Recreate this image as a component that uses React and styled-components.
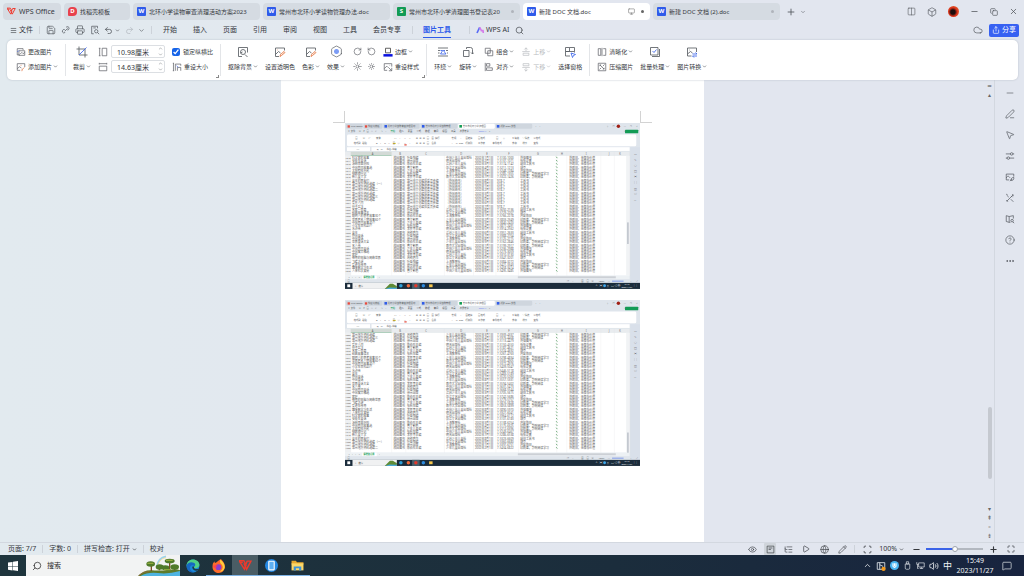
import React, {useState} from 'react';
import styled, {createGlobalStyle} from 'styled-components';
import {
    Search, Printer, Save, Undo2, Redo2, ChevronDown, Menu, Plus, Minus, X, Play, Globe, Eye,
    Pencil, Maximize, CircleHelp, Ellipsis, MousePointer2, Box, Columns2, Copy, Monitor,
    Cloud, Share, RotateCw, RotateCcw, Sun, SunDim, ListTree, ChevronUp, MessageSquare,
    Volume2, PenLine, Hexagon, Scan,
} from 'lucide-react';


const files = [
    {kind: 'doc', name: '北环小学读物审查清理活动方案2023'},
    {kind: 'doc', name: '常州市北环小学读物管理办法.doc'},
    {kind: 'sheet', name: '常州市北环小学清理图书登记表20', dot: true},
    {kind: 'doc', name: '新建 DOC 文档.doc', dot: true, active: true},
    {kind: 'doc', name: '新建 DOC 文档 (2).doc', dot: true},
];

const menus = ['开始', '插入', '页面', '引用', '审阅', '视图', '工具', '会员专享'];

// outlines on a 24 unit grid: grey strokes first, accent strokes second
const glyphs = {
    change: ['M9 19H3V4h14v3M7 9h14v11H7zM10 17l4-4 3 3 4-3', 'M3 12l4-4'],
    add: ['M10 20H3V4h18v8M3 16l6-5 4 4', 'M14 19l6-6M11 8h2M14 22l1-4'],
    crop: ['M6 1v17h17M1 6h17v17', 'M6 18L21 3'],
    high: ['M10 3h11v18H10zM2 3h4M2 21h4M4 3v18'],
    wide: ['M3 10h18v11H3zM3 2v4M21 2v4M3 4h18'],
    resize: ['M8 21V5h13v4M2 3h3M2 21h3M3.500 3v18M13 21v-8h8v8', 'M11 9l4 4'],
    cutout: ['M10 21H3V3h18v10M16 17l5 5M12 7a5 5 0 100 10 5 5 0 000-10M7 14l4-2'],
    transparent: ['M10 21H3V4h18v5M3 17l6-6 4 3', 'M12 21l1-4 7-6 2 2-7 6zM7 8h1'],
    color: ['M10 21H3V4h18v5M3 17l6-6 4 3', 'M12 21l1-4 7-6 2 2-7 6z'],
    restyle: ['M21 11V4H3v16h7M3 16l6-6 3 3M13 13l8 8M21 14v7h-7M16 8h1'],
    wrap: ['M2 4h20M2 20h20M2 9h4M18 9h4M2 14h3M20 14h2', 'M7 16l5-8 6 8zM7 9h3M14 9h2'],
    rotate: ['M3 9h11v12H3zM9 6V3h8a4 4 0 014 4v9M18 13l3 3 3-3'],
    group: ['M3 3h12v12H3zM9 9h12v12H9z'],
    align: ['M3 2v20M6 4h8v6H6zM6 14h14v6H6z'],
    up: ['M12 2v8M8 6l4-4 4 4M3 11h18M5 15h14v5H5z'],
    down: ['M12 14v8M8 18l4 4 4-4M3 13h18M5 4h14v5H5z'],
    pane: ['M3 3h8v8H3zM11 3h10v8M12 20H3v-9h18v2', 'M14 14l9 3-4 2-2 4z'],
    sharpen: ['M3 4h6v16H3zM15 4h6v16h-6M12 2v20'],
    compress: ['M3 3h18v18H3zM6 18l4-4M18 6l-4 4M17 14v3h-3M7 10V7h3M7 7l10 10'],
    batch: ['M3 3h15v15H3zM21 6v15H6', 'M7 10l3 3 5-6'],
    convert: ['M11 20H3V4h18v8M3 16l6-5 4 3M7 8h1', 'M13 16h9l-3-3M22 20h-9l3 3'],
    sliders: ['M2 7h11M16 4a3 3 0 100 6 3 3 0 000-6M19 7h3M22 17H11M8 14a3 3 0 100 6 3 3 0 000-6M2 17h3'],
    shape: ['M10 19H3V5h18v6M3 14c4-6 6-4 9 0M14 20c0-4 3-7 7-7 1 5-2 8-7 7M12 22l5-5'],
    tools: ['M4 20L20 4M17 3l4 4M4 5l5 5M14 15l6 6M3 3l3 1M3 17l4 4M15 7l3 3'],
    read: ['M3 4l7 2v14l-7-2zM10 6l10-2v7M10 20h3M17 13a3 3 0 100 6 3 3 0 000-6M19 19l3 3'],
    link: ['M9 15l7-7M9 11a4 4 0 10-3 8l4-1M12 6a4 4 0 113 6'],
    preview: ['M9 21H4V3h14v5M8 7h6M15 11a4 4 0 100 8 4 4 0 000-8M18 18l4 4'],
    page: ['M3 3h18v18H3zM7 8h10M7 12h6'],
    usb: ['M9 2h6v6H9zM6 8h12v11a3 3 0 01-3 3H9a3 3 0 01-3-3z'],
    network: ['M7 5h15v11H7zM14 16v4M10 20h9M2 3v6h5M4 9v11h3'],
};

const Glyph = ({name, size = 10, accent = '#3b63e8'}) => (
    <svg width={size} height={size} viewBox="0 0 24 24" fill="none" strokeWidth="1.7" aria-hidden="true">
        <path d={glyphs[name][0]} stroke="currentColor"/>
        {glyphs[name][1] && <path d={glyphs[name][1]} stroke={accent}/>}
    </svg>
);

const WpsMark = ({size = 8}) => (
    <svg width={size} height={size} viewBox="0 0 24 24" aria-hidden="true">
        <path d="M0 3h9l4 8-3 8zM2 6h5" fill="none" stroke="#f0382b" strokeWidth="2.600"/>
        <path d="M9 8l5 11L22 4h-7l-2 5" fill="none" stroke="#f0382b" strokeWidth="2.600"/>
    </svg>
);

const Caret = () => <ChevronDown size={5} strokeWidth={3}/>;

const Big = ({glyph, label, caret, accent, icon}) => (
    <BigButton type="button">
        {icon || <Glyph name={glyph} size={12} accent={accent}/>}
        <Label>{label}{caret && <Caret/>}</Label>
    </BigButton>
);

const Small = ({glyph, label, caret, accent, disabled}) => (
    <SmallButton type="button" disabled={disabled}>
        <Glyph name={glyph} size={10} accent={accent}/>
        <Label>{label}{caret && <Caret/>}</Label>
    </SmallButton>
);


// the two pasted screenshots of the book list
const titles = [
    '科学家的故事', '安徒生童话', '汤姆索亚历险', '中国民间故事选', '太阳照样升起', '骑鹅旅行记', '新儿童文学', '童年的朋友们',
    '常州地方资料选编（一）', '常州地方资料选编', '常州地方资料选编二', '常州地方资料选编', '常州地方资料选编三', '常州地方资料选编', '爱在人间',
    '孙子兵法', '名家一百篇', '经典故事读本', '聪明人的思考故事30个', '世界著名人物故事60个', '中国民间故事40个', '小学生百科40个',
    '水浒传', '童年', '外国童话', '中国童话', '世界童话大全', '名人传', '中国民间童话', '中国寓言精选', '家庭', '神奇的电脑与网络世界', '飞碟之谜',
    '爱迪生传奇', '趣味数学与生活', '人体科学奥秘',
];
const writers = ['叶圣陶编', '曹文轩著', '李民等主编', '徐州出版', '少年儿童编', '周锐著作', '陈伯吹主编', '张秋生编'];
const presses = [
    '中国少年儿童出版社', '浙江文艺出版社', '南京大学出版社', '江苏少年儿童社', '少年儿童出版社', '明天出版社', '上海教育社',
];
const notes = ['外借图书', '破旧工具书', '内容陈旧', '印刷差，影响阅读', '纸张泛黄', '缺页', '印刷差，影响阅读学习'];

const buildRows = (shift) => titles.map((_, i) => {
    const k = i + shift;
    const local = !shift && i > 6 && i < 16;
    return {
        no: 1840 + k,
        title: titles[k % titles.length],
        writer: local ? '常州市文化编撰委员会编' : writers[(k * 3) % writers.length],
        press: local ? '（外国画书）' : presses[(k * 5) % presses.length],
        date: `2002年${k % 9 + 1}月1日`,
        isbn: local ? '978-7' : `7-5${(k * 37) % 900 + 100}-${(k * 71) % 9000 + 1000}`,
        note: local ? '工具书' : notes[(k * 4) % notes.length],
    };
});

const heads = [['A', 96], ['B', 191], ['C', 281], ['D', 403], ['E', 493], ['F', 569], ['G', 670], ['H', 753], ['I', 837], ['J', 917], ['K', 955]];
const lines = [20, 162, 211, 345, 446, 524, 602, 735, 770, 888, 935, 988];

// [y, [[x, text], ...]] for the ribbon of the pasted screenshots
const ribbonTexts = [
    [15, [[20, 'WPS Office'], [80, '找稻壳模板'], [148, '北环小学读物审查清理活动'], [279, '常州市北环小学读物管理'], [409, '常州市北环小学清理图'], [539, '新建 DOC 文档'], [660, '+'], [672, '⌄'], [910, '▯'], [928, '◎'], [968, '—'], [988, '❐'], [1009, '✕']]],
    [32, [[10, '☰'], [20, '文件'], [48, '▣'], [62, '∂'], [75, '▤'], [89, '◰'], [104, '↶'], [125, '↷'], [140, '⌄'], [500, '⌕'], [968, '☁']]],
    [56, [[36, '▤'], [62, '▣'], [82, '✂'], [108, '宋体'], [170, '11'], [186, '⌄'], [206, 'A'], [222, 'A'], [246, '≡'], [258, '≡'], [270, '≡'], [284, '▤'], [300, '▦'], [312, '换行'], [370, '常规'], [398, '⌄'], [418, '▦转换'], [462, '▤格式'], [524, '▤'], [550, '◫'], [580, '∑填充'], [616, '▽筛选'], [654, '▣格式']]],
    [72, [[30, '格式刷'], [60, '粘贴'], [108, 'B'], [122, 'I'], [136, 'U'], [150, 'A'], [166, '▦'], [182, '◇'], [206, 'A'], [222, '⌄'], [246, '≡'], [258, '≡'], [270, '≡'], [284, '▤'], [300, '合并'], [370, '¥'], [384, '%'], [396, '000'], [418, '行和列'], [462, '工作表'], [512, '条件格式'], [580, '求和'], [616, '排序'], [654, '查找']]],
    [94, [[40, 'A1'], [110, 'Q'], [124, 'fx'], [144, '书名/书籍']]],
    [539, [[12, '«'], [24, '‹'], [36, '›'], [48, '»'], [117, '+']]],
    [552, [[9, '▤'], [770, '◎'], [788, '⌄'], [820, '▦'], [838, '▤'], [856, '▣'], [880, '100%'], [912, '—'], [990, '+'], [1010, '⤢']]],
];

const SheetPicture = ({shift, label}) => (
    <Picture viewBox="0 0 1024 576" role="img" aria-label={label}>
        <rect width="1024" height="576" fill="#dfe5ec"/>
        <g fill="#cfd6de">
            <rect x="3" y="3" width="58" height="17" rx="4"/>
            <rect x="64" y="3" width="66" height="17" rx="4"/>
            <rect x="133" y="3" width="126" height="17" rx="4"/>
            <rect x="263" y="3" width="127" height="17" rx="4"/>
            <rect x="523" y="3" width="127" height="17" rx="4"/>
        </g>
        <rect x="393" y="3" width="127" height="17" rx="4" fill="#fff"/>
        <rect x="9" y="8" width="8" height="8" fill="#e9493c"/>
        <rect x="69" y="8" width="8" height="8" fill="#e9493c"/>
        <rect x="137" y="7" width="9" height="9" fill="#2f5ce8"/>
        <rect x="267" y="7" width="9" height="9" fill="#2f5ce8"/>
        <rect x="397" y="7" width="9" height="9" fill="#129b55"/>
        <rect x="527" y="7" width="9" height="9" fill="#2f5ce8"/>
        <circle cx="949" cy="11" r="6" fill="#a02015"/>
        <rect x="972" y="23" width="46" height="13" rx="2" fill="#129b55"/>
        <rect x="7" y="40" width="1004" height="41" rx="5" fill="#fff"/>
        <rect x="166" y="69" width="10" height="4" fill="#f1cd28"/>
        <rect x="206" y="74" width="8" height="4" fill="#e0402f"/>
        <rect x="7" y="84" width="80" height="13" fill="#fff"/>
        <rect x="92" y="84" width="896" height="13" fill="#fff"/>
        <rect y="100" width="988" height="14" fill="#e9ecef"/>
        <rect x="20" y="100" width="142" height="14" fill="#d3dad6"/>
        <path d="M20 114h142" stroke="#4aa872" strokeWidth="2"/>
        <rect y="114" width="988" height="416" fill="#fff"/>
        <rect y="114" width="20" height="416" fill="#eef0f2"/>
        <rect x="976" y="114" width="12" height="416" fill="#f1f3f5"/>
        <rect x="979" y={shift ? 460 : 345} width="6" height="75" fill="#c3c8cf"/>
        <rect x="990" y="84" width="34" height="471" fill="#d9e0ea"/>
        <rect y="530" width="988" height="12" fill="#edf1f4"/>
        <rect x="600" y="532" width="340" height="7" fill="#ccd0d6"/>
        <rect x="60" y="530" width="50" height="12" fill="#fff"/>
        <path d={lines.map((x) => `M${x} 100V530`).join('')} stroke="#e2e4e6" strokeWidth="1"/>
        <g fontSize="8" fill="#5a5e63">
            {ribbonTexts.map(([y, items]) => items.map(([x, text]) => (
                <text key={`${x}-${y}`} x={x} y={y}>{text}</text>
            )))}
            {['开始', '插入', '页面', '公式', '数据', '审阅', '视图', '工具', '会员专享'].map((m, i) => (
                <text key={m} x={158 + i * 30} y="32" fill={i ? '#444' : '#129b55'}>{m}</text>
            ))}
            <text x="464" y="32" fill="#5a6cf0">WPS AI</text>
            <text x="63" y="539" fontWeight="700" fill="#129b55">清理登记表</text>
        </g>
        <g fontSize="9" fill="#666">
            {heads.map(([h, x]) => <text key={h} x={x} y="111" textAnchor="middle">{h}</text>)}
        </g>
        <g fontSize="10" fill="#5c5c5c">
            {buildRows(shift).map((r, i) => (
                <g key={r.no} transform={`translate(0 ${125 + i * 11.25})`}>
                    <text x="1" fontSize="8">{r.no}</text>
                    <text x="24">{r.title}</text>
                    <text x="168">校园图书</text>
                    <text x="215">{r.writer}</text>
                    <text x="351">{r.press}</text>
                    <text x="451">{r.date}</text>
                    <text x="528">{r.isbn}</text>
                    <text x="608">{r.note}</text>
                    <text x="778">外观旧，无保存价值</text>
                    <path d="M733 -8l4 5" stroke="#3f8f4d" strokeWidth="2.500"/>
                </g>
            ))}
        </g>
        <g fontSize="10" fill="#666">
            {['—', '✎', '◇', '◰', '▣', '▤', '◫', '◎', '…'].map((s, i) => <text key={s} x="1003" y={111 + i * 20}>{s}</text>)}
        </g>
        <path d="M927 549h40" stroke="#3b63e8" strokeWidth="2"/>
        <rect y="555" width="1024" height="21" fill="#1b2c3b"/>
        <rect x="26" y="555" width="154" height="21" fill="#f0f1f2"/>
        <text x="33" y="569" fontSize="9" fill="#333">⌕</text>
        <text x="47" y="569" fontSize="8" fill="#333">搜索</text>
        <path d="M138 576l10-10 8-8h10l10 6 4 2v10z" fill="#5f8b35"/>
        <path d="M140 576l14-5 26 1v4z" fill="#4aa9d8"/>
        <path d="M8 560h10v10H8z" fill="#fff"/>
        <rect x="233" y="555" width="26" height="21" fill="#49606c"/>
        <circle cx="194" cy="565" r="6" fill="#2c9fd9"/>
        <circle cx="220" cy="565" r="6" fill="#f0693a"/>
        <circle cx="246" cy="565" r="6" fill="#e3392c"/>
        <circle cx="272" cy="565" r="6" fill="#2d8be0"/>
        <rect x="292" y="560" width="12" height="10" fill="#f6c64b"/>
        <g fill="#e6ebef" fontSize="10">
            <text x="870" y="569">^</text>
            <text x="883" y="569">▣</text>
            <text x="910" y="569">▯</text>
            <text x="922" y="569">▭</text>
            <text x="935" y="569">◁</text>
            <text x="946" y="569">中</text>
            <text x="978" y="564" fontSize="7" textAnchor="middle">15:48</text>
            <text x="978" y="574" fontSize="7" textAnchor="middle">2023/11/27</text>
            <text x="1003" y="569">▢</text>
        </g>
        <circle cx="901" cy="565" r="5" fill="#3ea7ea"/>
    </Picture>
);


const App = () => {
    const [locked, setLocked] = useState(true);
    const [zoom, setZoom] = useState(50);

    return (
        <Window>
            <GlobalStyle/>
            <TitleBar>
                <Tab type="button" $w={58}><WpsMark size={9}/><TabName $home>WPS Office</TabName></Tab>
                <Tab type="button" $w={66}><FileMark $kind="docer">D</FileMark><TabName>找稻壳模板</TabName></Tab>
                {files.map((file) => (
                    <Tab type="button" key={file.name} $w={127} $active={file.active}>
                        <FileMark $kind={file.kind}>{file.kind === 'sheet' ? 'S' : 'W'}</FileMark>
                        <TabName>{file.name}</TabName>
                        {file.active && <Monitor size={7} color="#777"/>}
                        {file.dot && <Dot $active={file.active}/>}
                    </Tab>
                ))}
                <TabTools>
                    <IconButton type="button" aria-label="新建"><Plus size={10}/></IconButton>
                    <IconButton type="button" aria-label="更多标签"><ChevronDown size={6}/></IconButton>
                </TabTools>
                <WindowTools>
                    <IconButton type="button" aria-label="分栏"><Columns2 size={9} strokeWidth={1.5}/></IconButton>
                    <IconButton type="button" aria-label="应用"><Box size={10} strokeWidth={1.5}/></IconButton>
                    <Avatar/>
                    <IconButton type="button" aria-label="最小化"><Minus size={9}/></IconButton>
                    <IconButton type="button" aria-label="还原"><Copy size={8}/></IconButton>
                    <IconButton type="button" aria-label="关闭"><X size={9}/></IconButton>
                </WindowTools>
            </TitleBar>

            <MenuBar>
                <FileButton type="button"><Menu size={7}/>文件</FileButton>
                <Rule/>
                <QuickTools>
                    <IconButton type="button" aria-label="保存"><Save size={10} strokeWidth={1.6}/></IconButton>
                    <IconButton type="button" aria-label="链接"><Glyph name="link"/></IconButton>
                    <IconButton type="button" aria-label="打印"><Printer size={10} strokeWidth={1.6}/></IconButton>
                    <IconButton type="button" aria-label="预览"><Glyph name="preview"/></IconButton>
                    <IconButton type="button" aria-label="撤销"><Undo2 size={9}/><Caret/></IconButton>
                    <IconButton type="button" aria-label="重做" disabled><Redo2 size={9}/></IconButton>
                    <IconButton type="button" aria-label="更多"><ChevronDown size={7}/></IconButton>
                </QuickTools>
                <Rule/>
                <MenuItems>
                    {menus.map((menu) => <MenuItem type="button" key={menu}>{menu}</MenuItem>)}
                </MenuItems>
                <Rule/>
                <MenuItem type="button" $active>图片工具</MenuItem>
                <Rule/>
                <AiButton type="button">
                    <svg width="8" height="8" viewBox="0 0 24 24" fill="none" strokeWidth="5" aria-hidden="true">
                        <path d="M3 21L11 4" stroke="#5a6cf5"/>
                        <path d="M11 4l5 9M14 14h7l1 7" stroke="#d47bea"/>
                    </svg>
                    WPS AI
                </AiButton>
                <IconButton type="button" aria-label="搜索"><Search size={9}/></IconButton>
                <MenuEnd>
                    <IconButton type="button" aria-label="云同步"><Cloud size={10} strokeWidth={1.6}/></IconButton>
                    <ShareButton type="button"><Share size={8}/>分享</ShareButton>
                </MenuEnd>
            </MenuBar>

            <Ribbon>
                <Group>
                    <Stack>
                        <Small glyph="change" label="更改图片"/>
                        <Small glyph="add" label="添加图片" caret accent="#e2703a"/>
                    </Stack>
                </Group>
                <Group>
                    <Big glyph="crop" label="裁剪" caret/>
                    <Stack>
                        <Field>
                            <Glyph name="high"/>
                            <SizeInput aria-label="高度" defaultValue="10.98厘米"/>
                            <Spin><ChevronUp size={5}/><ChevronDown size={5}/></Spin>
                        </Field>
                        <Field>
                            <Glyph name="wide"/>
                            <SizeInput aria-label="宽度" defaultValue="14.63厘米"/>
                            <Spin><ChevronUp size={5}/><ChevronDown size={5}/></Spin>
                        </Field>
                    </Stack>
                    <Stack>
                        <CheckLabel>
                            <Check type="checkbox" checked={locked} onChange={() => setLocked(!locked)}/>
                            锁定纵横比
                        </CheckLabel>
                        <Small glyph="resize" label="重设大小"/>
                    </Stack>
                    <Launcher/>
                </Group>
                <Group>
                    <Big glyph="cutout" label="抠除背景" caret/>
                    <Big glyph="transparent" label="设置透明色" accent="#e2703a"/>
                    <Big glyph="color" label="色彩" caret accent="#e2703a"/>
                    <Big label="效果" caret icon={<EffectIcon><Hexagon size={13} strokeWidth={1.3}/></EffectIcon>}/>
                    <IconGrid>
                        <IconButton type="button" aria-label="增加对比度"><RotateCw size={9} strokeWidth={1.6}/></IconButton>
                        <IconButton type="button" aria-label="降低对比度"><RotateCcw size={9} strokeWidth={1.6}/></IconButton>
                        <IconButton type="button" aria-label="增加亮度"><Sun size={9} strokeWidth={1.6}/></IconButton>
                        <IconButton type="button" aria-label="降低亮度"><SunDim size={9} strokeWidth={1.6}/></IconButton>
                    </IconGrid>
                    <Stack>
                        <SmallButton type="button">
                            <svg width="10" height="10" viewBox="0 0 24 24" aria-hidden="true">
                                <path d="M6 3h12v11H6z" fill="none" stroke="#444" strokeWidth="2"/>
                                <path d="M1 17h22v6H1z" fill="#0a12e0"/>
                            </svg>
                            <Label>边框<Caret/></Label>
                        </SmallButton>
                        <Small glyph="restyle" label="重设样式"/>
                    </Stack>
                    <Launcher/>
                </Group>
                <Group>
                    <Big glyph="wrap" label="环绕" caret/>
                    <Big glyph="rotate" label="旋转" caret/>
                    <Stack>
                        <Small glyph="group" label="组合" caret/>
                        <Small glyph="align" label="对齐" caret/>
                    </Stack>
                    <Stack>
                        <Small glyph="up" label="上移" caret disabled/>
                        <Small glyph="down" label="下移" caret disabled/>
                    </Stack>
                    <Big glyph="pane" label="选择窗格"/>
                </Group>
                <Group>
                    <Stack>
                        <Small glyph="sharpen" label="清晰化" caret/>
                        <Small glyph="compress" label="压缩图片"/>
                    </Stack>
                    <Big glyph="batch" label="批量处理" caret/>
                    <Big glyph="convert" label="图片转换" caret/>
                </Group>
            </Ribbon>

            <Workspace>
                <Canvas>
                    <Page>
                        <Corners><Corner $side="left"/><Corner $side="right"/></Corners>
                        <SheetPicture shift={0} label="图书登记表截图一"/>
                        <SheetPicture shift={47} label="图书登记表截图二"/>
                    </Page>
                </Canvas>
                <ScrollRail>
                    <RailMark>≖</RailMark>
                    <RailMark>▴</RailMark>
                    <Track><Thumb/></Track>
                    <RailMark>▾</RailMark>
                    <RailMark>⇞</RailMark>
                    <RailMark>◦</RailMark>
                    <RailMark>⇟</RailMark>
                </ScrollRail>
                <SideBar>
                    <IconButton type="button" aria-label="收起"><Minus size={10} strokeWidth={1.5}/></IconButton>
                    <IconButton type="button" aria-label="编辑"><PenLine size={10} strokeWidth={1.6}/></IconButton>
                    <IconButton type="button" aria-label="选择"><MousePointer2 size={10} strokeWidth={1.6}/></IconButton>
                    <IconButton type="button" aria-label="属性"><Glyph name="sliders"/></IconButton>
                    <IconButton type="button" aria-label="图片"><Glyph name="shape"/></IconButton>
                    <IconButton type="button" aria-label="工具箱"><Glyph name="tools"/></IconButton>
                    <IconButton type="button" aria-label="查阅"><Glyph name="read"/></IconButton>
                    <IconButton type="button" aria-label="帮助"><CircleHelp size={10} strokeWidth={1.6}/></IconButton>
                    <IconButton type="button" aria-label="更多"><Ellipsis size={10}/></IconButton>
                </SideBar>
            </Workspace>

            <StatusBar>
                <StatusText>页面: 7/7</StatusText>
                <Rule/>
                <StatusText>字数: 0</StatusText>
                <Rule/>
                <StatusText>拼写检查: 打开 <Caret/></StatusText>
                <Rule/>
                <StatusText>校对</StatusText>
                <StatusEnd>
                    <ViewButton type="button" aria-label="护眼"><Eye size={9} strokeWidth={1.6}/></ViewButton>
                    <ViewButton type="button" aria-label="页面视图" $active><Glyph name="page" size={9}/></ViewButton>
                    <ViewButton type="button" aria-label="大纲"><ListTree size={9} strokeWidth={1.6}/></ViewButton>
                    <ViewButton type="button" aria-label="播放"><Play size={8}/></ViewButton>
                    <ViewButton type="button" aria-label="网页视图"><Globe size={9} strokeWidth={1.6}/></ViewButton>
                    <ViewButton type="button" aria-label="书写"><Pencil size={9} strokeWidth={1.6}/></ViewButton>
                    <Rule/>
                    <ViewButton type="button" aria-label="适应"><Scan size={9}/></ViewButton>
                    <StatusText>100% <Caret/></StatusText>
                    <ViewButton type="button" aria-label="缩小"><Minus size={9} strokeWidth={3}/></ViewButton>
                    <Zoom type="range" aria-label="缩放" value={zoom} onChange={(e) => setZoom(e.target.value)}/>
                    <ViewButton type="button" aria-label="放大"><Plus size={9} strokeWidth={3}/></ViewButton>
                    <ViewButton type="button" aria-label="全屏"><Maximize size={8}/></ViewButton>
                </StatusEnd>
            </StatusBar>

            <TaskBar>
                <TaskButton type="button" aria-label="开始">
                    <svg width="10" height="10" viewBox="0 0 20 20" fill="#fff" aria-hidden="true">
                        <path d="M0 3l9-1.200v8H0zM10 1.600L20 0v9.800H10zM0 10.800h9v8L0 17.500zM10 10.800h10V20l-10-1.400z"/>
                    </svg>
                </TaskButton>
                <SearchBox>
                    <MirrorSearch size={10} strokeWidth={1.8}/>
                    <SearchInput type="text" aria-label="搜索" placeholder="搜索"/>
                    <svg width="42" height="21" viewBox="0 0 126 63" aria-hidden="true">
                        <path d="M56 36Q60 8 84 4" fill="none" stroke="#9bd2ea" strokeWidth="5"/>
                        <path d="M58 36Q63 11 84 8" fill="none" stroke="#f3d879" strokeWidth="2"/>
                        <path d="M0 63Q18 44 42 46T92 44T126 46V63z" fill="#5d7c2c"/>
                        <path d="M8 63Q30 50 60 54T126 48V63z" fill="#4fb4e2"/>
                        <path d="M40 48V30M95 45V24M64 46V38M110 46V38" stroke="#7a4d25" strokeWidth="4"/>
                        <g fill="#4f7a2a">
                            <ellipse cx="38" cy="27" rx="13" ry="8"/>
                            <ellipse cx="95" cy="18" rx="15" ry="7"/>
                            <ellipse cx="65" cy="36" rx="12" ry="8"/>
                            <ellipse cx="82" cy="38" rx="12" ry="7"/>
                            <ellipse cx="110" cy="36" rx="13" ry="8"/>
                        </g>
                        <path d="M28 25h18M84 16h20M78 44h20" stroke="#8fa83c" strokeWidth="4"/>
                        <path d="M2 62Q16 48 34 50" fill="none" stroke="#8c6a3a" strokeWidth="3"/>
                    </svg>
                </SearchBox>
                <TaskButton type="button" aria-label="Edge">
                    <svg width="14" height="14" viewBox="0 0 24 24" aria-hidden="true">
                        <circle cx="12" cy="12" r="11" fill="#1b87d6"/>
                        <path d="M1 12C1 5 6 1 12 1s11 4 11 9c0 4-3 6-7 6-2 0-3-1-2-3 1-3-1-5-4-5-5 0-8 3-9 4z" fill="#4fcf86"/>
                        <path d="M1 12c1-6 8-8 13-5 3 2 2 5 0 6-1-3-6-3-7 1-1 5 4 9 9 8-8 3-15-2-15-10z" fill="#1668c2"/>
                        <path d="M14 13c-1 2 0 4 3 4h5c-1 2-3 3-5 3-4 0-7-4-6-7z" fill="#1d3a48"/>
                    </svg>
                </TaskButton>
                <TaskButton type="button" aria-label="Firefox" $open>
                    <svg width="14" height="14" viewBox="0 0 24 24" aria-hidden="true">
                        <path d="M12 2c2-1 3-1 3-2 3 2 4 5 5 6 3 4 4 17-8 18C4 24 0 18 1 11c0-3 2-5 3-7l1 3c1-1 4-2 7-5z" fill="#ff6a2b"/>
                        <path d="M14 1c5 4 8 8 8 13-1 5-5 8-9 8 5-3 7-8 4-12-2-2-4-3-3-9z" fill="#ffcf3c"/>
                        <circle cx="11" cy="14" r="5" fill="#8a3fd1"/>
                        <path d="M2 12c3-2 6-2 8 0-3 0-4 2-2 4-3 0-5-1-6-4z" fill="#ff3f55"/>
                    </svg>
                </TaskButton>
                <TaskButton type="button" aria-label="WPS" $open $active><WpsMark size={13}/></TaskButton>
                <TaskButton type="button" aria-label="手机助手" $open>
                    <svg width="13" height="13" viewBox="0 0 24 24" aria-hidden="true">
                        <circle cx="12" cy="12" r="12" fill="#2386e0"/>
                        <rect x="7" y="4" width="10" height="16" rx="1" fill="#5fb0f2" stroke="#fff" strokeWidth="2"/>
                    </svg>
                </TaskButton>
                <TaskButton type="button" aria-label="文件资源管理器" $open>
                    <svg width="13" height="13" viewBox="0 0 24 24" aria-hidden="true">
                        <path d="M1 3h8l2 3h12v4H1z" fill="#e8a92e"/>
                        <path d="M1 8h22v13H1z" fill="#fbd768"/>
                        <path d="M5 21v-7h14v7h-4v-4H9v4z" fill="#3e93d6"/>
                    </svg>
                </TaskButton>
                <Tray>
                    <ChevronUp size={9}/>
                    <svg width="10" height="10" viewBox="0 0 24 24" fill="none" aria-hidden="true">
                        <path d="M3 4h18v16H3zM9 4v16M9 9l8 4" stroke="#e6ebef" strokeWidth="2"/>
                        <circle cx="18" cy="19" r="5" fill="#f59a1b"/>
                    </svg>
                    <svg width="9" height="9" viewBox="0 0 24 24" aria-hidden="true">
                        <circle cx="12" cy="12" r="12" fill="#49b5f1"/>
                        <path d="M8 6v8q4 6 8 0V6M12 6v8" stroke="#fff" strokeWidth="3" fill="none"/>
                    </svg>
                    <Glyph name="usb" size={9}/>
                    <Glyph name="network" size={9}/>
                    <Volume2 size={10}/>
                    <InputMode>中</InputMode>
                    <Clock><time>15:49</time><time>2023/11/27</time></Clock>
                    <MessageSquare size={10} strokeWidth={1.6}/>
                </Tray>
            </TaskBar>
        </Window>
    );
};


export default App;


const GlobalStyle = createGlobalStyle`
  body {
    margin: 0;
    overflow: hidden;
  }

  * {
    box-sizing: border-box;
  }

  button,
  input {
    margin: 0;
    padding: 0;
    border: 0;
    background: none;
    color: inherit;
    font: inherit;
  }

  svg {
    flex-shrink: 0;
  }
`;

const Window = styled.div`
  height: 100vh;
  display: flex;
  flex-direction: column;
  background: linear-gradient(90deg, #e2eaef, #e2e6ef 60%);
  color: #34373c;
  font-family: "Noto Sans", "Noto Sans CJK SC", sans-serif;
  font-size: 7px;
  line-height: 10px;
  white-space: nowrap;
`;

const TitleBar = styled.header`
  height: 20px;
  padding: 3px 6px 0 3px;
  display: flex;
  gap: 3px;
`;

const Tab = styled.button`
  flex: 0 1 ${({$w}) => $w}px;
  min-width: 0;
  padding: 0 6px 0 4px;
  display: flex;
  align-items: center;
  gap: 3px;
  border-radius: 4px;
  background: ${({$active}) => $active ? '#fff' : '#d5dbe2'};
  text-align: left;
`;

const TabName = styled.span`
  flex: 1;
  font-size: ${({$home}) => $home ? 7 : 6}px;
`;

const TabTools = styled.div`
  padding-left: 3px;
  display: flex;
  gap: 4px;
`;

const markColors = {doc: '#2f5bea', sheet: '#129b55', docer: '#e8414d'};

const FileMark = styled.span`
  width: 9px;
  height: 9px;
  flex-shrink: 0;
  border-radius: ${({$kind}) => $kind === 'docer' ? '4px 4px 4px 1px' : '1px'};
  background: ${({$kind}) => markColors[$kind]};
  color: #fff;
  font-size: 6px;
  font-weight: 700;
  line-height: 9px;
  text-align: center;
`;

const Dot = styled.i`
  width: 3px;
  height: 3px;
  margin-left: 3px;
  border-radius: 50%;
  background: ${({$active}) => $active ? '#666' : '#b0b4bb'};
`;

const IconButton = styled.button`
  display: inline-flex;
  align-items: center;
  justify-content: center;
  gap: 2px;
  color: #50545a;

  &:disabled {
    color: #b4b9c0;
  }
`;

const WindowTools = styled.div`
  margin-left: auto;
  display: flex;
  align-items: center;
  gap: 11px;
`;

const Avatar = styled.span`
  width: 11px;
  height: 11px;
  border-radius: 50%;
  background: radial-gradient(circle at 45% 55%, #1c0d0c 25%, #d8321c 50%, #f08a3c);
`;

const MenuBar = styled.nav`
  height: 20px;
  padding: 0 5px 0 10px;
  display: flex;
  align-items: center;
  gap: 6px;
`;

const FileButton = styled.button`
  display: flex;
  align-items: center;
  gap: 2px;
`;

const Rule = styled.i`
  width: 1px;
  height: 8px;
  background: #cdd2d9;
`;

const QuickTools = styled.div`
  width: 99px;
  display: flex;
  align-items: center;
  justify-content: space-between;
`;

const MenuItems = styled.div`
  padding: 0 5px;
  display: flex;
  gap: 16px;
`;

const MenuItem = styled.button`
  height: 15px;
  margin: ${({$active}) => $active ? '0 12px 0 4px' : 0};
  border-bottom: 1px solid ${({$active}) => $active ? '#2f5bea' : 'transparent'};
  color: ${({$active}) => $active ? '#2f5bea' : 'inherit'};
  font-weight: ${({$active}) => $active ? 700 : 400};
`;

const AiButton = styled.button`
  display: flex;
  align-items: center;
  gap: 2px;
`;

const MenuEnd = styled.div`
  margin-left: auto;
  display: flex;
  align-items: center;
  gap: 6px;
`;

const ShareButton = styled.button`
  width: 30px;
  height: 13px;
  display: flex;
  align-items: center;
  justify-content: center;
  gap: 2px;
  border-radius: 2px;
  background: #3761f2;
  color: #fff;
`;

const Ribbon = styled.section`
  height: 40px;
  margin: 0 6px 0 7px;
  padding: 4px 2px;
  display: flex;
  border-radius: 5px;
  background: #fff;
  box-shadow: 0 0 2px #b3bac4;
  font-size: 6px;
  line-height: 8px;
  z-index: 1;
`;

const Group = styled.div`
  position: relative;
  padding: 0 7px;
  display: flex;
  gap: 7px;

  & + & {
    border-left: 1px solid #e3e5e8;
  }
`;

const Stack = styled.div`
  display: grid;
  grid-template-rows: 15px 15px;
  align-items: center;
`;

const IconGrid = styled.div`
  display: grid;
  grid-template: 15px 15px / 10px 10px;
  column-gap: 4px;
`;

const BigButton = styled.button`
  display: grid;
  grid-template-rows: 15px 15px;
  align-items: center;
  justify-items: center;

  svg {
    color: #5a5e64;
  }
`;

const SmallButton = styled.button`
  display: flex;
  align-items: center;
  gap: 2px;

  svg {
    color: #5a5e64;
  }

  &:disabled,
  &:disabled svg {
    color: #b9bcc0;
  }
`;

const Label = styled.span`
  display: inline-flex;
  align-items: center;
  gap: 1px;
`;

const EffectIcon = styled.span`
  display: grid;
  place-items: center;
  background: radial-gradient(circle, #7c9cf5 2px, transparent 3px);
`;

const Launcher = styled.span`
  position: absolute;
  right: 1px;
  bottom: -2px;
  width: 3px;
  height: 3px;
  border-right: 1px solid #888;
  border-bottom: 1px solid #888;
`;

const Field = styled.label`
  display: flex;
  align-items: center;
  gap: 3px;
  position: relative;
  color: #5a5e64;
`;

const SizeInput = styled.input`
  width: 54px;
  height: 13px;
  padding-left: 5px;
  border: 1px solid #dcdfe3;
  border-radius: 2px;
  color: #34373c;
  font-size: 7px;
`;

const Spin = styled.span`
  position: absolute;
  right: 2px;
  display: grid;
  gap: 1px;
`;

const CheckLabel = styled.label`
  display: flex;
  align-items: center;
  gap: 3px;
`;

const Check = styled.input`
  width: 8px;
  height: 8px;
  accent-color: #1664e8;
`;

const Workspace = styled.main`
  flex: 1;
  min-height: 0;
  display: flex;
`;

const Canvas = styled.div`
  flex: 1;
  display: flex;
  justify-content: center;
`;

const Page = styled.article`
  width: 423px;
  padding: 31px 64px 0;
  background: #fff;
`;

const Picture = styled.svg`
  width: 100%;
  margin-bottom: 11px;
  display: block;
`;

const Corners = styled.div`
  height: 12px;
  margin: 0 -12px;
  display: flex;
  justify-content: space-between;
`;

const Corner = styled.i`
  width: 12px;
  border-bottom: 1px solid #d3d3d3;
  border-${({$side}) => $side === 'left' ? 'right' : 'left'}: 1px solid #d3d3d3;
`;

const ScrollRail = styled.div`
  width: 10px;
  padding: 2px 0 1px;
  display: flex;
  flex-direction: column;
  align-items: center;
  border-right: 1px solid #d3d8e0;
`;

const RailMark = styled.span`
  color: #666;
  font-size: 6px;
  line-height: 9px;
`;

const Track = styled.div`
  flex: 1;
  width: 4px;
  display: flex;
  flex-direction: column;
  justify-content: flex-end;
  padding-bottom: 26px;
`;

const Thumb = styled.i`
  height: 19%;
  border-radius: 2px;
  background: #c5c9d0;
`;

const SideBar = styled.aside`
  width: 29px;
  padding-top: 8px;
  display: flex;
  flex-direction: column;
  align-items: center;
  gap: 11px;
`;

const StatusBar = styled.footer`
  height: 13px;
  padding: 0 7px 0 8px;
  display: flex;
  align-items: center;
  gap: 6px;
  border-top: 1px solid #d3d8e0;
`;

const StatusText = styled.span`
  display: inline-flex;
  align-items: center;
  gap: 2px;
  line-height: 8px;
`;

const StatusEnd = styled.div`
  margin-left: auto;
  display: flex;
  align-items: center;
  gap: 6px;
`;

const ViewButton = styled.button`
  width: 12px;
  height: 12px;
  display: flex;
  align-items: center;
  justify-content: center;
  border-radius: 1px;
  background: ${({$active}) => $active ? '#cfd4da' : 'none'};
`;

const Zoom = styled.input`
  width: 57px;
  height: 6px;
  margin: 0 -2px;
  appearance: none;
  background: linear-gradient(90deg, #3b63e8 50%, #b3b8c0 50%) center / 100% 2px no-repeat;

  &::-webkit-slider-thumb {
    appearance: none;
    width: 6px;
    height: 6px;
    border: 1px solid #9da3ac;
    border-radius: 50%;
    background: #fff;
  }
`;

const TaskBar = styled.footer`
  height: 21px;
  display: flex;
  background: linear-gradient(90deg, #1f353d, #1b2d3c 60%, #18243f);
  color: #f0f3f5;
`;

const TaskButton = styled.button`
  width: 26px;
  display: flex;
  align-items: center;
  justify-content: center;
  background: ${({$active}) => $active ? '#4a5d65' : 'none'};
  box-shadow: ${({$open}) => $open ? 'inset 0 -1px #7fb4e6' : 'none'};
`;

const SearchBox = styled.label`
  width: 154px;
  padding-left: 6px;
  display: flex;
  align-items: center;
  gap: 5px;
  background: #f2f3f3;
  color: #2b2b2b;
`;

const MirrorSearch = styled(Search)`
  transform: scaleX(-1);
`;

const SearchInput = styled.input`
  flex: 1;
  min-width: 0;

  &::placeholder {
    color: #2b2b2b;
  }
`;

const Tray = styled.div`
  margin-left: auto;
  padding-right: 12px;
  display: flex;
  align-items: center;
  gap: 4px;
`;

const InputMode = styled.span`
  font-size: 9px;
`;

const Clock = styled.div`
  width: 38px;
  margin-right: 4px;
  display: grid;
  text-align: center;
`;
